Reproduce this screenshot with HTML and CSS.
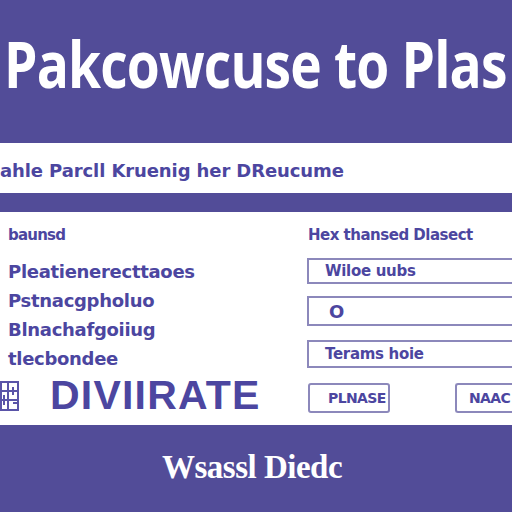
FILE: index.html
```html
<!DOCTYPE html>
<html>
<head>
<meta charset="utf-8">
<link rel="stylesheet" href="styles.css">
</head>
<body>
<div class="page">
  <header class="hero">
    <h1 class="title">Pakcowcuse to Plas</h1>
  </header>
  <div class="subbar">
    <span class="subtext">ahle Parcll Kruenig her DReucume</span>
  </div>
  <div class="stripe"></div>
  <main class="content">
    <div class="cols">
      <div class="col-left">
        <div class="label">baunsd</div>
        <ul class="list">
          <li>Pleatienerecttaoes</li>
          <li>Pstnacgpholuo</li>
          <li>Blnachafgoiiug</li>
          <li>tlecbondee</li>
        </ul>
      </div>
      <div class="col-right">
        <div class="label">Hex thansed Dlasect</div>
        <div class="field f1">Wiloe uubs</div>
        <div class="field f2">O</div>
        <div class="field f3">Terams hoie</div>
      </div>
    </div>
    <div class="actions">
      <svg class="icon" width="20" height="34" viewBox="0 0 20 34">
        <g fill="none" stroke="#5a54a8" stroke-width="2">
          <rect x="1" y="3" width="17" height="28"/>
          <path d="M1 12h17M1 21h17M8 3v28M13 8v8M4 16v10M13 24h5"/>
        </g>
      </svg>
      <span class="brand">DIVIIRATE</span>
      <button class="btn b1">PLNASE</button>
      <button class="btn b2">NAAC</button>
    </div>
  </main>
  <footer class="foot">
    <span class="foot-text">Wsassl Diedc</span>
  </footer>
</div>
</body>
</html>
```
FILE: styles.css
```css
* { box-sizing: border-box; }
html, body { margin: 0; padding: 0; }
body {
  width: 512px;
  height: 512px;
  overflow: hidden;
  background: #fff;
  font-family: "DejaVu Sans", sans-serif;
}
.page {
  display: flex;
  flex-direction: column;
  height: 512px;
}
.hero {
  height: 143px;
  background: #524c98;
  display: flex;
  align-items: center;
  padding-left: 4px;
  overflow: hidden;
}
.title {
  margin: 0;
  margin-top: -18px;
  color: #fff;
  font-family: "Open Sans", sans-serif;
  font-weight: 700;
  font-size: 65px;
  letter-spacing: -1px;
  white-space: nowrap;
  transform: scaleX(0.82);
  transform-origin: left center;
}
.subbar {
  height: 50px;
  background: #fff;
  display: flex;
  align-items: center;
  overflow: hidden;
}
.subtext {
  color: #4c46a0;
  font-family: "DejaVu Sans", sans-serif;
  font-weight: 700;
  font-size: 18px;
  letter-spacing: -0.1px;
  white-space: nowrap;
  margin-top: 4px;
}
.stripe {
  height: 19px;
  background: #524c98;
}
.content {
  height: 213px;
  display: flex;
  flex-direction: column;
  padding-top: 12px;
}
.cols {
  display: flex;
}
.col-left {
  width: 307px;
  padding-left: 8px;
}
.col-right {
  flex: 1;
  display: flex;
  flex-direction: column;
}
.label {
  color: #4c46a0;
  font-weight: 700;
  font-size: 15px;
  letter-spacing: -0.8px;
  height: 22px;
  line-height: 22px;
}
.list {
  list-style: none;
  margin: 11px 0 0 0;
  padding: 0;
}
.list li {
  color: #4c46a0;
  font-weight: 700;
  font-size: 18px;
  letter-spacing: -0.3px;
  line-height: 29px;
}
.col-right .label { margin-left: 1px; letter-spacing: -0.5px; }
.field {
  height: 26px;
  border: 2px solid #8c88bb;
  border-right: none;
  color: #4c46a0;
  font-weight: 700;
  font-size: 15px;
  letter-spacing: -0.3px;
  padding-left: 16px;
  display: flex;
  align-items: center;
}
.f1 { margin-top: 12px; }
.f2 { margin-top: 12px; height: 30px; font-size: 18px; padding-left: 20px; }
.f3 { margin-top: 14px; height: 28px; }
.actions {
  display: flex;
  align-items: center;
  margin-top: -1px;
}
.icon { flex-shrink: 0; }
.brand {
  flex-shrink: 0;
  margin-left: 30px;
  color: #4c46a0;
  font-family: "Liberation Sans", sans-serif;
  font-weight: 700;
  font-size: 41px;
  letter-spacing: 1.2px;
  width: 258px;
}
.btn {
  flex-shrink: 0;
  height: 30px;
  border: 2px solid #8c88bb;
  border-radius: 3px;
  background: #fff;
  color: #4c46a0;
  font-family: "DejaVu Sans", sans-serif;
  font-weight: 700;
  font-size: 14px;
  letter-spacing: -0.6px;
  padding: 0 0 0 18px;
  text-align: left;
}
.b1 { width: 82px; margin-top: 4px; }
.b2 { width: 60px; margin-left: 65px; margin-top: 4px; padding-left: 12px; border-right: none; border-radius: 3px 0 0 3px; }
.foot {
  flex: 1;
  background: #524c98;
  display: flex;
  justify-content: center;
  align-items: center;
}
.foot-text {
  color: #fff;
  font-family: "Liberation Serif", serif;
  font-weight: 700;
  font-size: 33px;
  letter-spacing: -0.5px;
  margin-left: -8px;
  margin-top: -2px;
}
```
